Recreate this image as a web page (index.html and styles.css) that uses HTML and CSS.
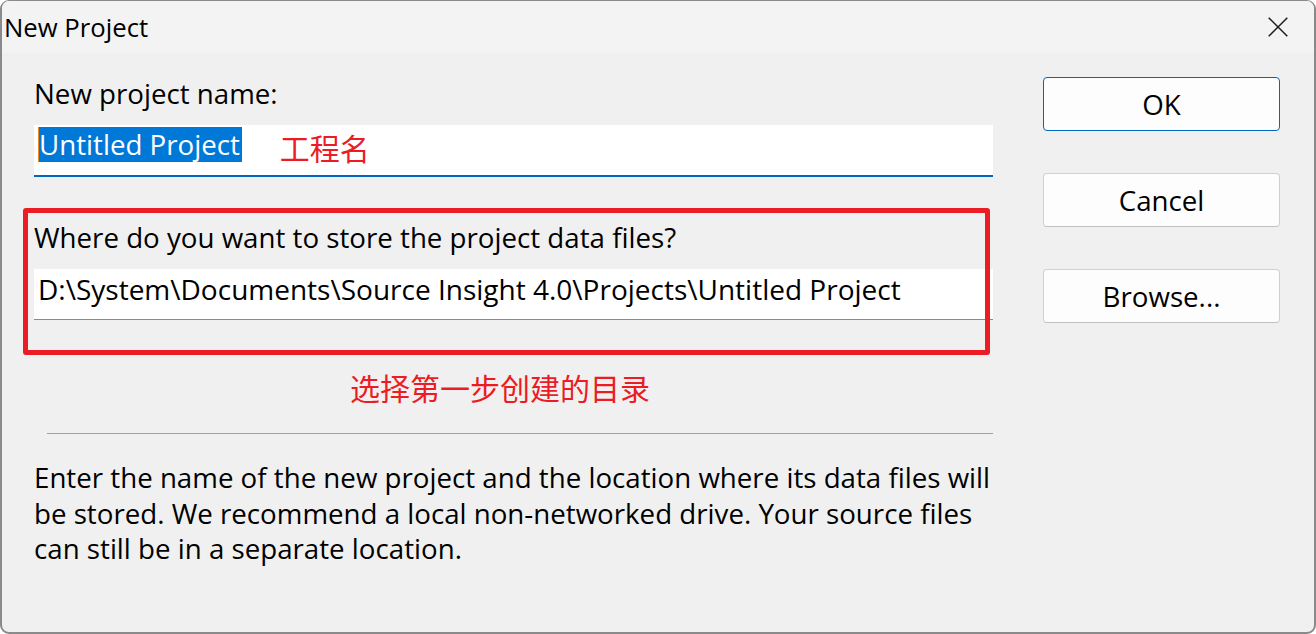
FILE: index.html
```html
<!DOCTYPE html>
<html lang="en">
<head>
<meta charset="utf-8">
<title>New Project</title>
<link rel="stylesheet" href="styles.css">
</head>
<body>
<div class="window">
  <div class="titlebar">
    <span class="title">New Project</span>
    <svg class="close" width="20" height="20" viewBox="0 0 20 20" aria-label="Close">
      <path d="M0.7 0.7L19.3 19.3M19.3 0.7L0.7 19.3" stroke="#1b1b1b" stroke-width="1.5" fill="none"/>
    </svg>
  </div>
  <div class="content">
    <div class="main">
      <div class="label">New project name:</div>
      <div class="field field-focus"><span class="sel">Untitled Project</span><span class="note note-name">工程名</span></div>
      <div class="group">
        <div class="label label-where">Where do you want to store the project data files?</div>
        <div class="field field-path">D:\System\Documents\Source Insight 4.0\Projects\Untitled Project</div>
        <div class="callout"></div>
      </div>
      <div class="note note-dir">选择第一步创建的目录</div>
      <div class="sep"></div>
      <p class="help">Enter the name of the new project and the location where its data files will<br>be stored. We recommend a local non-networked drive. Your source files<br>can still be in a separate location.</p>
    </div>
    <div class="buttons">
      <button class="btn btn-default">OK</button>
      <button class="btn">Cancel</button>
      <button class="btn">Browse...</button>
    </div>
  </div>
</div>
</body>
</html>
```
FILE: styles.css
```css
html, body {
  margin: 0;
  padding: 0;
  background: #ffffff;
}

body {
  font-family: "Open Sans", "Noto Sans", "Noto Sans CJK SC", sans-serif;
  color: #000;
}

.window {
  box-sizing: border-box;
  width: 1316px;
  height: 634px;
  border: 2px solid #8a8a8a;
  border-top-width: 1px;
  border-radius: 9px;
  background: #f0f0f0;
  overflow: hidden;
}

.titlebar {
  height: 52px;
  background: #f3f3f3;
  display: flex;
  align-items: center;
  justify-content: space-between;
  padding: 0 26px 0 2px;
}

.title {
  font-size: 25.7px;
  line-height: 52px;
  padding-top: 2px;
}

.close {
  display: block;
}

.content {
  display: flex;
  padding-left: 32px;
}

.main {
  width: 959px;
  padding-top: 22px;
}

.label {
  font-size: 27.7px;
  line-height: 36px;
  height: 36px;
  white-space: nowrap;
}

.field {
  box-sizing: border-box;
  background: #fff;
  font-size: 27.7px;
  line-height: 36px;
  white-space: nowrap;
}

.field-focus {
  margin-top: 14px;
  height: 52px;
  border-bottom: 2px solid #0067c0;
  padding: 2px 0 0 4px;
  display: flex;
  align-items: flex-start;
}

.sel {
  display: inline-block;
  background: #0078d7;
  color: #fff;
  line-height: 35px;
  height: 35px;
  border-left: 1px solid #f08a24;
  padding-right: 2px;
}

.note {
  font-family: "Noto Sans CJK SC", "Noto Sans", sans-serif;
  color: #ec1c24;
  font-size: 30px;
}

.note-name {
  margin-left: 38px;
  line-height: 35px;
  padding-top: 3px;
}

.group {
  position: relative;
  margin-top: 42px;
}

.field-path {
  margin-top: 14px;
  height: 51px;
  border-bottom: 1px solid #8a8a8a;
  padding: 2px 0 0 4px;
  font-size: 28px;
}

.callout {
  position: absolute;
  top: -11px;
  left: -11px;
  right: 3px;
  bottom: -35px;
  border: 5px solid #ec1c24;
  border-radius: 3px;
  pointer-events: none;
}

.note-dir {
  margin-top: 49px;
  padding-left: 316px;
  line-height: 36px;
  height: 36px;
}

.sep {
  margin: 28px 0 0 13px;
  width: 946px;
  border-top: 1px solid #a0a0a0;
}

.help {
  margin: 26px 0 0 0;
  font-size: 27.7px;
  line-height: 35.5px;
  white-space: nowrap;
}

.buttons {
  width: 237px;
  margin-left: 50px;
  padding-top: 24px;
  display: flex;
  flex-direction: column;
  gap: 42px;
}

.btn {
  box-sizing: border-box;
  height: 54px;
  width: 237px;
  background: #fdfdfd;
  border: 1px solid #d0d0d0;
  border-bottom-color: #c2c2c2;
  border-radius: 4px;
  font-family: "Open Sans", "Noto Sans", sans-serif;
  font-size: 27.7px;
  color: #000;
  padding: 0;
  display: flex;
  align-items: center;
  justify-content: center;
}

.btn-default {
  border-color: #0067c0;
}
```
